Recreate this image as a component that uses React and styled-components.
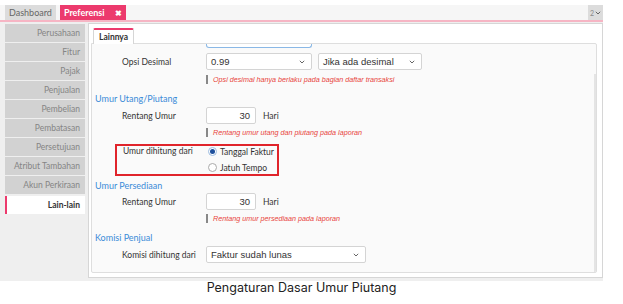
import React from "react";
import styled, { createGlobalStyle } from "styled-components";

const Global = createGlobalStyle`
  html, body { margin: 0; padding: 0; background: #fff; }
  body { font-family: Lato, "Noto Sans", sans-serif; }
  * { box-sizing: border-box; }
`;

const Page = styled.div`
  width: 623px;
  height: 304px;
  padding-top: 5px;
  display: flex;
  flex-direction: column;
`;

const Shot = styled.div`
  width: 603px;
  height: 276px;
  background: #efefef;
  display: flex;
  flex-direction: column;
`;

const TabBar = styled.div`
  height: 17px;
  flex-shrink: 0;
  display: flex;
  align-items: flex-start;
  gap: 4px;
  padding-left: 5px;
  background: #f6f6f6;
  border-bottom: 2px solid #f6b5c4;
`;

const TopTab = styled.div`
  height: 15px;
  display: flex;
  align-items: center;
  gap: 10px;
  padding: 0 4px;
  font-size: 9px;
  font-weight: ${p => (p.$active ? 700 : 400)};
  color: ${p => (p.$active ? "#fff" : "#666")};
  background: ${p => (p.$active ? "#ec3a6d" : "#dcdcdc")};
`;

const Close = styled.span`
  font-size: 8px;
  font-weight: 700;
`;

const PageBtn = styled.div`
  margin-left: auto;
  width: 15px;
  height: 15px;
  background: #dcdcdc;
  color: #888;
  font-size: 7px;
  display: flex;
  align-items: center;
  justify-content: center;
  gap: 1px;
`;

const Body = styled.div`
  flex: 1;
  display: flex;
  gap: 3px;
  padding: 1px 0 3px 5px;
`;

const Sidebar = styled.div`
  width: 80px;
  display: flex;
  flex-direction: column;
  gap: 1px;
  padding-top: 1px;
`;

const SideItem = styled.div`
  height: 18px;
  display: flex;
  align-items: center;
  justify-content: flex-end;
  padding-right: 5px;
  white-space: nowrap;
  font-size: 8.5px;
  color: ${p => (p.$active ? "#333" : "#858585")};
  font-weight: ${p => (p.$active ? 700 : 400)};
  background: ${p => (p.$active ? "#fff" : "#d2d2d2")};
  border-left: 2px solid ${p => (p.$active ? "#ec3a6d" : "transparent")};
  margin-top: ${p => (p.$active ? "1px" : "0")};
`;

const Main = styled.div`
  flex: 1;
  background: #fff;
  border: 1px solid #d6d6d6;
  padding: 4px 5px 4px 2px;
  display: flex;
  flex-direction: column;
`;

const InnerTabs = styled.div`
  display: flex;
  padding-left: 2px;
`;

const InnerTab = styled.div`
  height: 16px;
  padding: 0 5px;
  display: flex;
  align-items: center;
  font-size: 8.5px;
  font-weight: 700;
  color: #333;
  background: #fff;
  border: 1px solid #d6d6d6;
  border-top: 2px solid #ec3a6d;
  border-bottom: none;
  border-radius: 2px 2px 0 0;
  margin-bottom: -1px;
  position: relative;
  z-index: 1;
`;

const Panel = styled.div`
  flex: 1;
  background: #fafafa;
  border: 1px solid #dedede;
  border-radius: 0 2px 2px 2px;
  display: flex;
  overflow: hidden;
`;

const Content = styled.div`
  flex: 1;
  padding: 0 0 0 3px;
  display: flex;
  flex-direction: column;
`;

const Scrollbar = styled.div`
  width: 2px;
  margin: 30px 0 0 0;
  background: #e4e4e4;
`;

const Row = styled.div`
  display: flex;
  align-items: center;
  height: 17px;
  margin-top: ${p => p.$mt || 0}px;
`;

const Label = styled.div`
  width: 111px;
  padding-left: 27px;
  font-size: 8.5px;
  color: #333;
  flex-shrink: 0;
  white-space: nowrap;
`;

const StubRow = styled.div`
  display: flex;
  padding-left: 111px;
`;

const Stub = styled.div`
  width: 106px;
  height: 4px;
  border: 1px solid #8ab8e6;
  border-top: none;
  border-radius: 0 0 3px 3px;
  background: #fff;
`;

const Select = styled.div`
  width: ${p => p.$w}px;
  height: 17px;
  background: #fff;
  border: 1px solid #d4d4d4;
  border-radius: 2px;
  display: flex;
  align-items: center;
  justify-content: space-between;
  padding: 0 6px 0 4px;
  font-family: "Liberation Sans", Arial, sans-serif;
  font-size: 9.5px;
  color: #333;
  margin-right: 6px;
`;

const Input = styled.div`
  width: 50px;
  height: 17px;
  background: #fff;
  border: 1px solid #d4d4d4;
  border-radius: 2px;
  display: flex;
  align-items: center;
  justify-content: flex-end;
  padding-right: 5px;
  font-family: "Liberation Sans", Arial, sans-serif;
  font-size: 9.5px;
  color: #333;
  margin-right: 7px;
`;

const Unit = styled.span`
  font-size: 8.5px;
  color: #333;
`;

const Note = styled.div`
  display: flex;
  align-items: center;
  gap: 5px;
  margin-left: 111px;
  height: 10px;
  margin-top: ${p => p.$mt}px;
  font-family: "Liberation Sans", Arial, sans-serif;
  font-style: italic;
  font-size: 7.2px;
  color: #e8453c;
  white-space: nowrap;
  &::before {
    content: "";
    width: 2px;
    height: 9px;
    background: #888;
  }
`;

const Heading = styled.div`
  font-size: 9px;
  color: #3b8bd8;
  margin-top: ${p => p.$mt}px;
  height: 13px;
  display: flex;
  align-items: center;
`;

const Highlight = styled.div`
  margin-left: 20px;
  margin-top: 7px;
  width: 164px;
  height: 32px;
  border: 2px solid #e0242b;
  display: flex;
`;

const HLabel = styled.div`
  width: 91px;
  padding-left: 6px;
  font-size: 8.5px;
  color: #333;
  line-height: 11px;
  white-space: nowrap;
`;

const Radios = styled.div`
  display: flex;
  flex-direction: column;
  gap: 5px;
`;

const RadioRow = styled.div`
  display: flex;
  align-items: center;
  gap: 3px;
  font-size: 8.5px;
  color: #333;
  height: 11px;
  white-space: nowrap;
`;

const Radio = styled.span`
  width: 9px;
  height: 9px;
  border-radius: 50%;
  border: 1px solid ${p => (p.$on ? "#9bbbe0" : "#aaa")};
  background: #fff;
  display: flex;
  align-items: center;
  justify-content: center;
  &::after {
    content: "";
    width: 5px;
    height: 5px;
    border-radius: 50%;
    background: ${p => (p.$on ? "#1e4f9c" : "transparent")};
  }
`;

const Caption = styled.div`
  width: 603px;
  text-align: center;
  font-family: Inter, "Liberation Sans", sans-serif;
  font-size: 12.5px;
  line-height: 14px;
  color: #222;
`;

const Chevron = () => (
  <svg width="6" height="4" viewBox="0 0 6 4">
    <path d="M0.8 0.8 L3 3 L5.2 0.8" fill="none" stroke="#555" strokeWidth="0.9" />
  </svg>
);

const sideItems = [
  "Perusahaan",
  "Fitur",
  "Pajak",
  "Penjualan",
  "Pembelian",
  "Pembatasan",
  "Persetujuan",
  "Atribut Tambahan",
  "Akun Perkiraan",
];

export default function App() {
  return (
    <>
      <Global />
      <Page>
        <Shot>
          <TabBar>
            <TopTab>Dashboard</TopTab>
            <TopTab $active>
              Preferensi <Close>✖</Close>
            </TopTab>
            <PageBtn>
              2 <Chevron />
            </PageBtn>
          </TabBar>
          <Body>
            <Sidebar>
              {sideItems.map(s => (
                <SideItem key={s}>{s}</SideItem>
              ))}
              <SideItem $active>Lain-lain</SideItem>
            </Sidebar>
            <Main>
              <InnerTabs>
                <InnerTab>Lainnya</InnerTab>
              </InnerTabs>
              <Panel>
                <Content>
                  <StubRow>
                    <Stub />
                  </StubRow>
                  <Row $mt={5}>
                    <Label>Opsi Desimal</Label>
                    <Select $w={106}>
                      0.99 <Chevron />
                    </Select>
                    <Select $w={104}>
                      Jika ada desimal <Chevron />
                    </Select>
                  </Row>
                  <Note $mt={4}>Opsi desimal hanya berlaku pada bagian daftar transaksi</Note>
                  <Heading $mt={8}>Umur Utang/Piutang</Heading>
                  <Row $mt={2}>
                    <Label>Rentang Umur</Label>
                    <Input>30</Input>
                    <Unit>Hari</Unit>
                  </Row>
                  <Note $mt={3}>Rentang umur utang dan piutang pada laporan</Note>
                  <Highlight>
                    <HLabel>Umur dihitung dari</HLabel>
                    <Radios>
                      <RadioRow>
                        <Radio $on /> Tanggal Faktur
                      </RadioRow>
                      <RadioRow>
                        <Radio /> Jatuh Tempo
                      </RadioRow>
                    </Radios>
                  </Highlight>
                  <Heading $mt={3}>Umur Persediaan</Heading>
                  <Row $mt={1}>
                    <Label>Rentang Umur</Label>
                    <Input>30</Input>
                    <Unit>Hari</Unit>
                  </Row>
                  <Note $mt={3}>Rentang umur persediaan pada laporan</Note>
                  <Heading $mt={8}>Komisi Penjual</Heading>
                  <Row $mt={2}>
                    <Label>Komisi dihitung dari</Label>
                    <Select $w={160}>
                      Faktur sudah lunas <Chevron />
                    </Select>
                  </Row>
                </Content>
                <Scrollbar />
              </Panel>
            </Main>
          </Body>
        </Shot>
        <Caption>Pengaturan Dasar Umur Piutang</Caption>
      </Page>
    </>
  );
}
